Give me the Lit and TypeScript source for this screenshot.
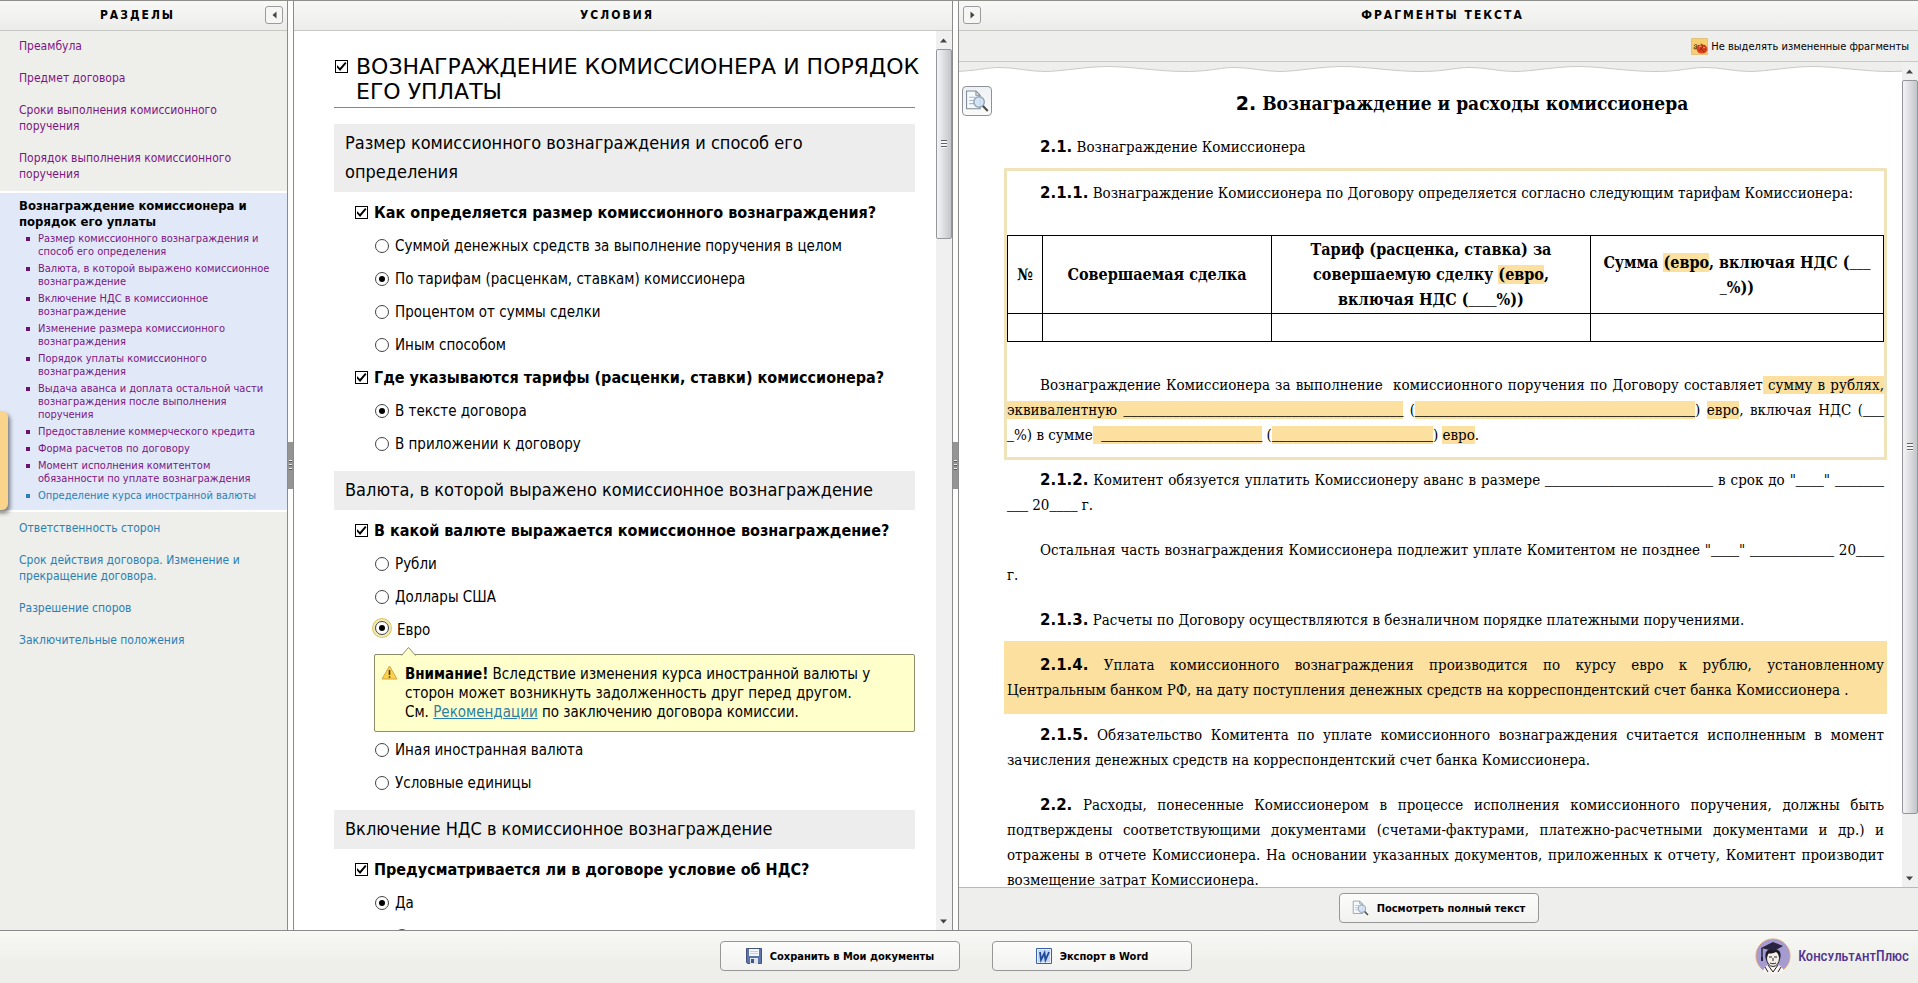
import { LitElement, html, css, svg, nothing } from "lit";
import { customElement, property } from "lit/decorators.js";
import { classMap } from "lit/directives/class-map.js";

interface Choice {
  label: string;
  checked?: boolean;
  focused?: boolean;
  note?: boolean;
  nested?: boolean;
}

interface Question {
  title: string;
  choices: Choice[];
}

interface Topic {
  title: string;
  questions: Question[];
}

const SECTIONS_BEFORE = [
  "Преамбула",
  "Предмет договора",
  "Сроки выполнения комиссионного поручения",
  "Порядок выполнения комиссионного поручения",
];

const SUBSECTIONS = [
  "Размер комиссионного вознаграждения и способ его определения",
  "Валюта, в которой выражено комиссионное вознаграждение",
  "Включение НДС в комиссионное вознаграждение",
  "Изменение размера комиссионного вознаграждения",
  "Порядок уплаты комиссионного вознаграждения",
  "Выдача аванса и доплата остальной части вознаграждения после выполнения поручения",
  "Предоставление коммерческого кредита",
  "Форма расчетов по договору",
  "Момент исполнения комитентом обязанности по уплате вознаграждения",
];

const SECTIONS_AFTER = [
  "Ответственность сторон",
  "Срок действия договора. Изменение и прекращение договора.",
  "Разрешение споров",
  "Заключительные положения",
];

const TOPICS: Topic[] = [
  {
    title: "Размер комиссионного вознаграждения и способ его определения",
    questions: [
      {
        title: "Как определяется размер комиссионного вознаграждения?",
        choices: [
          { label: "Суммой денежных средств за выполнение поручения в целом" },
          { label: "По тарифам (расценкам, ставкам) комиссионера", checked: true },
          { label: "Процентом от суммы сделки" },
          { label: "Иным способом" },
        ],
      },
      {
        title: "Где указываются тарифы (расценки, ставки) комиссионера?",
        choices: [
          { label: "В тексте договора", checked: true },
          { label: "В приложении к договору" },
        ],
      },
    ],
  },
  {
    title: "Валюта, в которой выражено комиссионное вознаграждение",
    questions: [
      {
        title: "В какой валюте выражается комиссионное вознаграждение?",
        choices: [
          { label: "Рубли" },
          { label: "Доллары США" },
          { label: "Евро", checked: true, focused: true, note: true },
          { label: "Иная иностранная валюта" },
          { label: "Условные единицы" },
        ],
      },
    ],
  },
  {
    title: "Включение НДС в комиссионное вознаграждение",
    questions: [
      {
        title: "Предусматривается ли в договоре условие об НДС?",
        choices: [
          { label: "Да", checked: true },
          { label: "", nested: true },
        ],
      },
    ],
  },
];

const documentGlyph = svg`
  <path d="M1.5 1.5h9l4 4v13h-13z" fill="#f7fafc" stroke="#7f8a94"/>
  <path d="M10.5 1.5v4h4" fill="none" stroke="#7f8a94"/>
  <path d="M4 7.5h6M4 10.5h5M4 13.5h5" stroke="#a9b8c8"/>
  <circle cx="13.5" cy="12" r="5" fill="#cfe0f2" fill-opacity=".85" stroke="#93a5ba" stroke-width="1.4"/>
  <path d="M17.2 15.8l4.600 4.800" stroke="#4a4a4a" stroke-width="2"/>`;

@customElement("scroll-bar")
export class ScrollBar extends LitElement {
  @property({ type: Number }) share = 50;

  static styles = css`
    :host {
      display: flex;
      flex-direction: column;
      background: #f0f0f0;
      overflow: hidden;
    }
    .cap {
      flex: none;
      height: 18px;
      display: flex;
      align-items: center;
      justify-content: center;
    }
    .track {
      flex: 1;
      min-height: 0;
    }
    .thumb {
      box-sizing: border-box;
      border: 1px solid #95969b;
      border-radius: 2px;
      background: linear-gradient(90deg, #f4f4f5, #dcdde0 50%, #c3c4c8);
      display: flex;
      align-items: center;
      justify-content: center;
    }
    .grip {
      width: 6px;
      height: 8px;
      background: repeating-linear-gradient(#5f6165 0 1px, #f5f5f5 1px 3px);
    }
    svg {
      display: block;
    }
  `;

  render() {
    return html`
      <div class="cap"><svg width="8" height="5"><path d="M0 4.5L3.5 0.5L7 4.5z" fill="#444" /></svg></div>
      <div class="track">
        <div class="thumb" style="height:${this.share}%"><div class="grip"></div></div>
      </div>
      <div class="cap"><svg width="8" height="5"><path d="M0 0.5L3.5 4.5L7 0.5z" fill="#444" /></svg></div>
    `;
  }
}

@customElement("section-nav")
export class SectionNav extends LitElement {
  static styles = css`
    :host {
      display: block;
      font-size: 12px;
      line-height: 16px;
      padding-top: 7px;
    }
    a {
      color: #7d1585;
      text-decoration: none;
    }
    .entry {
      display: block;
      padding: 0 32px 16px 19px;
    }
    .fresh {
      color: #2a80b5;
    }
    .open {
      border: solid #fff;
      border-width: 2px 0;
      background: #e1e9f8;
      padding: 5px 16px 8px 19px;
      margin-bottom: 8px;
    }
    .current {
      display: block;
      color: #000;
      font-size: 13px;
      font-weight: bold;
    }
    ul {
      list-style: none;
      margin: 2px 0 0;
      padding: 0 0 0 7px;
      font-size: 11px;
      line-height: 13px;
      display: flex;
      flex-direction: column;
      gap: 4px;
    }
    li {
      display: flex;
      gap: 8px;
      color: #6a1272;
    }
    li::before {
      content: "";
      flex: none;
      width: 4px;
      height: 4px;
      margin-top: 5px;
      background: currentColor;
    }
    li.next {
      color: #2a80b5;
    }
    .lead {
      padding-bottom: 9px;
    }
  `;

  render() {
    return html`
      ${SECTIONS_BEFORE.map(
        (text, i) => html`<a
          href="#"
          class=${classMap({ entry: true, lead: i === SECTIONS_BEFORE.length - 1 })}
          >${text}</a
        >`,
      )}
      <div class="open">
        <a href="#" class="current">Вознаграждение комиссионера и порядок его уплаты</a>
        <ul>
          ${SUBSECTIONS.map((text) => html`<li><a href="#">${text}</a></li>`)}
          <li class="next"><a href="#" class="fresh">Определение курса иностранной валюты</a></li>
        </ul>
      </div>
      ${SECTIONS_AFTER.map((text) => html`<a href="#" class="entry fresh">${text}</a>`)}
    `;
  }
}

@customElement("condition-form")
export class ConditionForm extends LitElement {
  static styles = css`
    :host {
      display: block;
      font-size: 15px;
      padding: 22px 21px 0 40px;
      color: #000;
    }
    input {
      appearance: none;
      flex: none;
      box-sizing: border-box;
      margin: 0;
      background: #fff;
    }
    input[type="checkbox"] {
      width: 13px;
      height: 13px;
      border: 1px solid #000;
      display: grid;
      place-items: center;
    }
    input[type="checkbox"]:checked::before {
      content: "";
      width: 10px;
      height: 9px;
      background: #000;
      clip-path: polygon(8% 35%, 34% 68%, 86% 0, 100% 14%, 36% 100%, 0 55%);
    }
    input[type="radio"] {
      width: 14px;
      height: 14px;
      border: 1px solid #444;
      border-radius: 50%;
      display: grid;
      place-items: center;
    }
    input[type="radio"]:checked::before {
      content: "";
      width: 6px;
      height: 6px;
      border-radius: 50%;
      background: #000;
    }
    input.focused {
      box-shadow: 0 0 0 2px #f0e9b8, 0 0 0 3px #dcc766;
      margin: 0 2px 4px 0;
    }
    .title {
      display: flex;
      align-items: flex-start;
      gap: 8px;
      padding: 1px 0 3px 1px;
      border-bottom: 1px solid #888;
      margin-bottom: 16px;
    }
    .title input {
      margin-top: 6px;
    }
    h1 {
      margin: 0 -8px 0 0;
      font-family: "DejaVu Sans", Tahoma, sans-serif;
      font-size: 22px;
      line-height: 25px;
      font-weight: normal;
      text-transform: uppercase;
    }
    h2 {
      margin: 11px 0 4px;
      padding: 4px 11px 6px;
      background: #ededed;
      font-size: 18px;
      line-height: 29px;
      font-weight: normal;
    }
    h2:first-of-type {
      margin-top: 0;
    }
    fieldset {
      border: 0;
      margin: 0;
      padding: 0 0 0 21px;
      min-width: 0;
    }
    .row {
      display: flex;
      align-items: center;
      height: 33px;
      gap: 6px;
      white-space: nowrap;
    }
    .question {
      font-size: 16px;
      font-weight: bold;
    }
    .choice {
      padding-left: 20px;
    }
    .nested {
      padding-left: 40px;
    }
    .note {
      position: relative;
      display: flex;
      gap: 7px;
      margin: 8px 0 1px 19px;
      padding: 10px 16px 9px 6px;
      border: 1px solid #8d8d6a;
      border-radius: 2px;
      background: #ffffcb;
      line-height: 19px;
    }
    .note p {
      margin: 0;
    }
    .beak {
      position: absolute;
      left: 26px;
      top: -8px;
    }
    .sign {
      flex: none;
    }
    .note a {
      color: #2a80a5;
    }
  `;

  private renderNote() {
    return html`
      <div class="note">
        <svg class="beak" width="16" height="9">
          <path d="M0.5 8.5L7.5 0.5L14.5 8.5" fill="#ffffcb" stroke="#8d8d6a" />
          <path d="M1.5 8.5h12" stroke="#ffffcb" />
        </svg>
        <svg class="sign" width="17" height="15" viewBox="0 0 17 15">
          <path d="M8.5 1L16 14H1z" fill="#fbd34a" stroke="#d9a441" stroke-linejoin="round" />
          <path d="M8.5 5v5M8.5 11.2v1.6" stroke="#4a3a10" stroke-width="1.6" />
        </svg>
        <p>
          <b>Внимание!</b> Вследствие изменения курса иностранной валюты у сторон может возникнуть
          задолженность друг перед другом.<br />См. <a href="#">Рекомендации</a> по заключению договора
          комиссии.
        </p>
      </div>
    `;
  }

  render() {
    return html`
      <label class="title">
        <input type="checkbox" checked />
        <h1>Вознаграждение комиссионера и порядок его уплаты</h1>
      </label>
      ${TOPICS.map(
        (topic, t) => html`
          <h2>${topic.title}</h2>
          ${topic.questions.map(
            (question, q) => html`
              <fieldset>
                <label class="row question">
                  <input type="checkbox" checked />${question.title}
                </label>
                ${question.choices.map(
                  (choice) => html`
                    <label class=${classMap({ row: true, choice: true, nested: !!choice.nested })}>
                      <input
                        type="radio"
                        name="q-${t}-${q}${choice.nested ? "-nested" : ""}"
                        class=${classMap({ focused: !!choice.focused })}
                        ?checked=${choice.checked}
                      />${choice.label}
                    </label>
                    ${choice.note ? this.renderNote() : nothing}
                  `,
                )}
              </fieldset>
            `,
          )}
        `,
      )}
    `;
  }
}

@customElement("contract-text")
export class ContractText extends LitElement {
  static styles = css`
    :host {
      display: block;
      font-family: "DejaVu Serif Condensed", Georgia, serif;
      font-size: 15px;
      line-height: 25px;
      color: #000;
      padding: 18px 18px 0 48px;
    }
    h1 {
      margin: 0 0 19px;
      font-size: 19px;
      line-height: 25px;
      text-align: center;
      text-indent: 33px;
    }
    p {
      margin: 0 0 20px;
      text-indent: 33px;
      text-align: justify;
    }
    .num {
      font: bold 15px/1 "DejaVu Sans", Verdana, sans-serif;
    }
    h1 .num {
      font-size: 19px;
    }
    .line {
      font: 14px/1 "Liberation Serif", Georgia, serif;
    }
    mark {
      background: #fbe0a0;
      color: inherit;
    }
    .changed {
      margin: -12px -3px 8px;
      padding: 10px 0 9px;
      border: 3px solid #f0e3b9;
    }
    .added {
      margin: -12px -3px 9px;
      padding: 12px 3px 11px;
      background: #fbe0a0;
    }
    .changed p:last-child,
    .added p:last-child {
      margin-bottom: 0;
    }
    .changed p:first-child {
      margin-bottom: 29px;
    }
    table {
      width: 100%;
      border-collapse: collapse;
      table-layout: fixed;
      margin-bottom: 31px;
    }
    th,
    td {
      border: 1px solid #000;
      padding: 1px 8px;
      height: 25px;
      text-align: center;
    }
    th {
      font-size: 16px;
    }
    .narrow {
      width: 18px;
    }
    .deal {
      width: 212px;
    }
    .rate {
      width: 302px;
    }
  `;

  private line(n: number) {
    return html`<span class="line">${"_".repeat(n)}</span>`;
  }

  render() {
    return html`
      <h1><span class="num">2.</span> Вознаграждение и расходы комиссионера</h1>
      <p><span class="num">2.1.</span> Вознаграждение Комиссионера</p>
      <div class="changed">
        <p>
          <span class="num">2.1.1.</span> Вознаграждение Комиссионера по Договору определяется согласно
          следующим тарифам Комиссионера:
        </p>
        <table>
          <thead>
            <tr>
              <th class="narrow">№</th>
              <th class="deal">Совершаемая сделка</th>
              <th class="rate">
                Тариф (расценка, ставка) за совершаемую сделку <mark>(евро</mark>, включая НДС
                (${this.line(4)}%))
              </th>
              <th>Сумма <mark>(евро</mark>, включая НДС (${this.line(3)}<wbr />${this.line(1)}%))</th>
            </tr>
          </thead>
          <tbody>
            <tr>
              <td></td>
              <td></td>
              <td></td>
              <td></td>
            </tr>
          </tbody>
        </table>
        <p>
          Вознаграждение Комиссионера за выполнение&nbsp; комиссионного поручения по Договору
          составляет<mark> сумму в рублях, эквивалентную ${this.line(40)}</mark>
          (<mark>${this.line(40)}</mark>) <mark>евро</mark>, включая НДС
          (${this.line(3)}<wbr />${this.line(1)}%) в сумме<mark>&nbsp; ${this.line(23)}</mark>
          (<mark>${this.line(23)}</mark>) <mark>евро</mark>.
        </p>
      </div>
      <p>
        <span class="num">2.1.2.</span> Комитент обязуется уплатить Комиссионеру аванс в размере
        ${this.line(24)} в срок до "${this.line(4)}" ${this.line(7)}<wbr />${this.line(3)}
        20${this.line(4)} г.
      </p>
      <p>
        Остальная часть вознаграждения Комиссионера подлежит уплате Комитентом не позднее
        "${this.line(4)}" ${this.line(12)} 20${this.line(4)} г.
      </p>
      <p>
        <span class="num">2.1.3.</span> Расчеты по Договору осуществляются в безналичном порядке
        платежными поручениями.
      </p>
      <div class="added">
        <p>
          <span class="num">2.1.4.</span> Уплата комиссионного вознаграждения производится по курсу евро к
          рублю, установленному Центральным&nbsp;банком РФ, на дату поступления денежных средств на
          корреспондентский счет банка Комиссионера .
        </p>
      </div>
      <p>
        <span class="num">2.1.5.</span> Обязательство Комитента по уплате комиссионного вознаграждения
        считается исполненным в момент зачисления денежных средств на корреспондентский счет банка
        Комиссионера.
      </p>
      <p>
        <span class="num">2.2.</span> Расходы, понесенные Комиссионером в процессе исполнения комиссионного
        поручения, должны быть подтверждены соответствующими документами (счетами-фактурами,
        платежно-расчетными документами и др.) и отражены в отчете Комиссионера. На основании указанных
        документов, приложенных к отчету, Комитент производит возмещение затрат Комиссионера.
      </p>
    `;
  }
}

@customElement("app-root")
export class AppRoot extends LitElement {
  static styles = css`
    :host {
      box-sizing: border-box;
      display: grid;
      grid-template-columns: 288px 5px minmax(0, 660fr) 5px minmax(0, 960fr);
      grid-template-rows: minmax(0, 1fr) auto;
      height: 100vh;
      border-top: 1px solid #8f8f8b;
      background: #fff;
      overflow: hidden;
      position: relative;
      font-family: "DejaVu Sans Condensed", Tahoma, "Noto Sans", sans-serif;
      font-size: 13px;
    }
    .pane {
      display: flex;
      flex-direction: column;
      min-height: 0;
      box-sizing: border-box;
      border: 0 solid #8b8b8b;
    }
    .sections {
      border-right-width: 1px;
      background: #eeeeea;
    }
    .conditions {
      border-left-width: 1px;
      border-right-width: 1px;
    }
    .fragments {
      border-left-width: 1px;
    }
    .head {
      flex: none;
      box-sizing: border-box;
      display: grid;
      grid-template-columns: 8px 1fr 20px;
      align-items: center;
      height: 30px;
      padding: 0 4px 2px;
      border-bottom: 1px solid #c6c9c4;
      background: linear-gradient(#f8f8f6, #ecedea);
    }
    .fragments .head {
      grid-template-columns: 24px 1fr 16px;
    }
    .head h2 {
      grid-column: 2;
      margin: 0;
      font-size: 12px;
      font-weight: bold;
      letter-spacing: 2px;
      text-align: center;
      text-transform: uppercase;
    }
    .fold {
      box-sizing: border-box;
      width: 18px;
      height: 18px;
      padding: 0;
      display: grid;
      place-items: center;
      border: 1px solid #9b9b9b;
      border-radius: 3px;
      background: #f6f6f4;
    }
    .sections .fold {
      justify-self: end;
    }
    .fragments .fold {
      grid-row: 1;
    }
    .split {
      display: flex;
      flex-direction: column;
      justify-content: center;
      background: #fdfdfc;
    }
    .handle {
      height: 47px;
      display: grid;
      place-items: center;
      background: #949494;
    }
    .dots {
      width: 3px;
      height: 11px;
      background: repeating-linear-gradient(#eee 0 1px, #555 1px 2px, #949494 2px 4px);
    }
    .body {
      flex: 1;
      min-height: 0;
      display: flex;
    }
    .view {
      flex: 1;
      min-width: 0;
      overflow: hidden;
    }
    .bar {
      flex: none;
      width: 16px;
    }
    .tools {
      flex: none;
      display: flex;
      align-items: center;
      justify-content: flex-end;
      height: 30px;
      padding-right: 9px;
      border-bottom: 1px solid #c6c9c4;
      background: #eeeeec;
    }
    .toggle {
      display: flex;
      align-items: center;
      gap: 3px;
      padding: 0;
      border: 0;
      background: none;
      font: inherit;
      font-size: 11px;
    }
    .paper {
      position: relative;
    }
    .wave {
      display: block;
      width: 100%;
      height: 11px;
    }
    .look {
      position: absolute;
      left: 3px;
      top: 24px;
      box-sizing: border-box;
      width: 30px;
      height: 30px;
      padding: 0;
      display: grid;
      place-items: center;
      border: 1px solid #8f9296;
      border-radius: 4px;
      background: linear-gradient(#eef1f4, #fafafa);
    }
    .under {
      flex: none;
      display: flex;
      justify-content: center;
      padding: 5px 0 7px;
      border-top: 1px solid #b9bab8;
      background: #eeeeec;
    }
    .button {
      display: flex;
      align-items: center;
      justify-content: center;
      gap: 8px;
      box-sizing: border-box;
      height: 30px;
      padding: 0 10px;
      border: 1px solid #979797;
      border-radius: 4px;
      background: linear-gradient(#fcfcfb, #f1f1ef);
      font: inherit;
      font-size: 11px;
      font-weight: bold;
      color: #000;
      white-space: nowrap;
    }
    .foot {
      grid-column: 1 / -1;
      display: grid;
      grid-template-columns: 1fr auto 1fr;
      align-items: center;
      height: 50px;
      padding: 0 6px 2px 0;
      border-top: 1px solid #8b8b8b;
      background: linear-gradient(#f8f8f5, #eeeeea 60%);
    }
    .actions {
      grid-column: 2;
      display: flex;
      gap: 32px;
    }
    .save {
      width: 240px;
    }
    .export {
      width: 200px;
    }
    .brand {
      justify-self: end;
      display: flex;
      align-items: center;
      gap: 7px;
      padding-right: 3px;
      color: #523590;
      text-decoration: none;
      font-family: "Roboto Condensed", Roboto, sans-serif;
      font-size: 14px;
      font-weight: 500;
      font-variant: small-caps;
    }
    .tab {
      position: absolute;
      left: -8px;
      top: 410px;
      width: 16px;
      height: 99px;
      padding: 0;
      border: 0;
      border-radius: 6px;
      background: #fbd48c;
      box-shadow: 2px 3px 4px rgba(0, 0, 0, 0.5);
    }
    svg {
      flex: none;
    }
  `;

  render() {
    return html`
      <section class="pane sections">
        <header class="head">
          <h2>Разделы</h2>
          <button class="fold" aria-label="Свернуть разделы">
            <svg width="5" height="8"><path d="M4.5 0.5v7L0.5 4z" fill="#444" /></svg>
          </button>
        </header>
        <section-nav></section-nav>
      </section>
      <div class="split"><div class="handle"><div class="dots"></div></div></div>
      <section class="pane conditions">
        <header class="head"><h2>Условия</h2></header>
        <div class="body">
          <div class="view"><condition-form></condition-form></div>
          <scroll-bar class="bar" .share=${22}></scroll-bar>
        </div>
      </section>
      <div class="split"><div class="handle"><div class="dots"></div></div></div>
      <section class="pane fragments">
        <header class="head">
          <h2>Фрагменты текста</h2>
          <button class="fold" aria-label="Свернуть фрагменты">
            <svg width="5" height="8"><path d="M0.5 0.5v7L4.5 4z" fill="#444" /></svg>
          </button>
        </header>
        <div class="tools">
          <button class="toggle">
            <svg width="17" height="17" viewBox="0 0 17 17">
              <path d="M0.5 0.5h16v16h-16z" fill="#f7cf73" stroke="#e0c27a" />
              <path d="M3 8c1-2 3-2 3 0v3M6 9c-3-1-4 2-2 2l2-1" fill="none" stroke="#55301a" />
              <ellipse cx="11" cy="11" rx="5.5" ry="4.5" fill="#d9431e" />
              <path d="M7 7l6 7M10 5.5l5 7M14 7l-6 6" stroke="#9a2a10" fill="none" />
              <path d="M8 9l2-1M12 9l2 1" stroke="#ffb08a" />
            </svg>
            Не выделять измененные фрагменты
          </button>
        </div>
        <div class="body">
          <div class="view paper">
            <svg class="wave">
              <defs>
                <pattern id="wave" width="235" height="11" x="41" patternUnits="userSpaceOnUse">
                  <path
                    d="M0 0V5.5C16 5.5 29 9.5 45 9.5S86 4.5 108 4.5S159 9.5 185 9.5S219 5.5 235 5.5V0z"
                    fill="#eeeeec"
                  />
                  <path
                    d="M0 5.5C16 5.5 29 9.5 45 9.5S86 4.5 108 4.5S159 9.5 185 9.5S219 5.5 235 5.5"
                    fill="none"
                    stroke="#c9cac8"
                  />
                </pattern>
              </defs>
              <rect width="100%" height="11" fill="url(#wave)" />
            </svg>
            <button class="look" aria-label="Показать в тексте">
              <svg width="24" height="24" viewBox="0 0 23 22">${documentGlyph}</svg>
            </button>
            <contract-text></contract-text>
          </div>
          <scroll-bar class="bar" .share=${93}></scroll-bar>
        </div>
        <div class="under">
          <button class="button export">
            <svg width="17" height="16" viewBox="0 0 23 22">${documentGlyph}</svg>
            Посмотреть полный текст
          </button>
        </div>
      </section>
      <footer class="foot">
        <div class="actions">
          <button class="button save">
            <svg width="16" height="16" viewBox="0 0 16 16">
              <path d="M0.5 0.5h15v15h-14l-1-1z" fill="#5f74a6" stroke="#44557f" />
              <path d="M3 1h10v7H3z" fill="#f4f5f8" />
              <path d="M4 3.5h8M4 5.5h8" stroke="#c9ced8" />
              <path d="M4 10h8v6H4z" fill="#dfe3ea" />
              <path d="M5 11h3v4H5z" fill="#44557f" />
            </svg>
            Сохранить в Мои документы
          </button>
          <button class="button export">
            <svg width="16" height="16" viewBox="0 0 16 16">
              <path d="M0.5 0.5h15v15h-15z" fill="#e8effa" stroke="#3a62a8" />
              <path d="M2 2h12v12H2z" fill="#c4d6f0" />
              <path d="M4 4l1 8L8.5 5l1 7L13 4" fill="none" stroke="#1f4a9c" stroke-width="1.8" />
            </svg>
            Экспорт в Word
          </button>
        </div>
        <a class="brand" href="#">
          <svg width="36" height="36" viewBox="0 0 36 36">
            <circle cx="18" cy="18" r="17" fill="#a49bd0" stroke="#dca078" />
            <path d="M8 34c1-6 5-8 10-8s9 2 11 7c-6 4-15 4-21 1z" fill="#f7f4f2" />
            <path d="M13 27l5 7 5-7M10 29l3 5M26 29l-3 5" fill="none" stroke="#222" />
            <ellipse cx="18" cy="20" rx="6.5" ry="8.5" fill="#f5ede8" stroke="#222" />
            <path d="M11 22c-2-8 1-11 7-11s9 3 7 10c-1-4-2-6-4-7-3 2-7 1-8 2z" fill="#1d1a22" />
            <path d="M14 19h3M19 19h3M18 20v3M15 25c2 1 4 1 6 0" fill="none" stroke="#222" />
            <path d="M6 10L18 4l10 4-9 5z" fill="#2a2440" />
            <path d="M7 10v11" stroke="#2a2440" stroke-width="1.5" />
            <path d="M6 19h2v4H6z" fill="#2a2440" />
          </svg>
          КонсультантПлюс
        </a>
      </footer>
      <button class="tab" aria-label="Открыть боковую панель"></button>
    `;
  }
}
